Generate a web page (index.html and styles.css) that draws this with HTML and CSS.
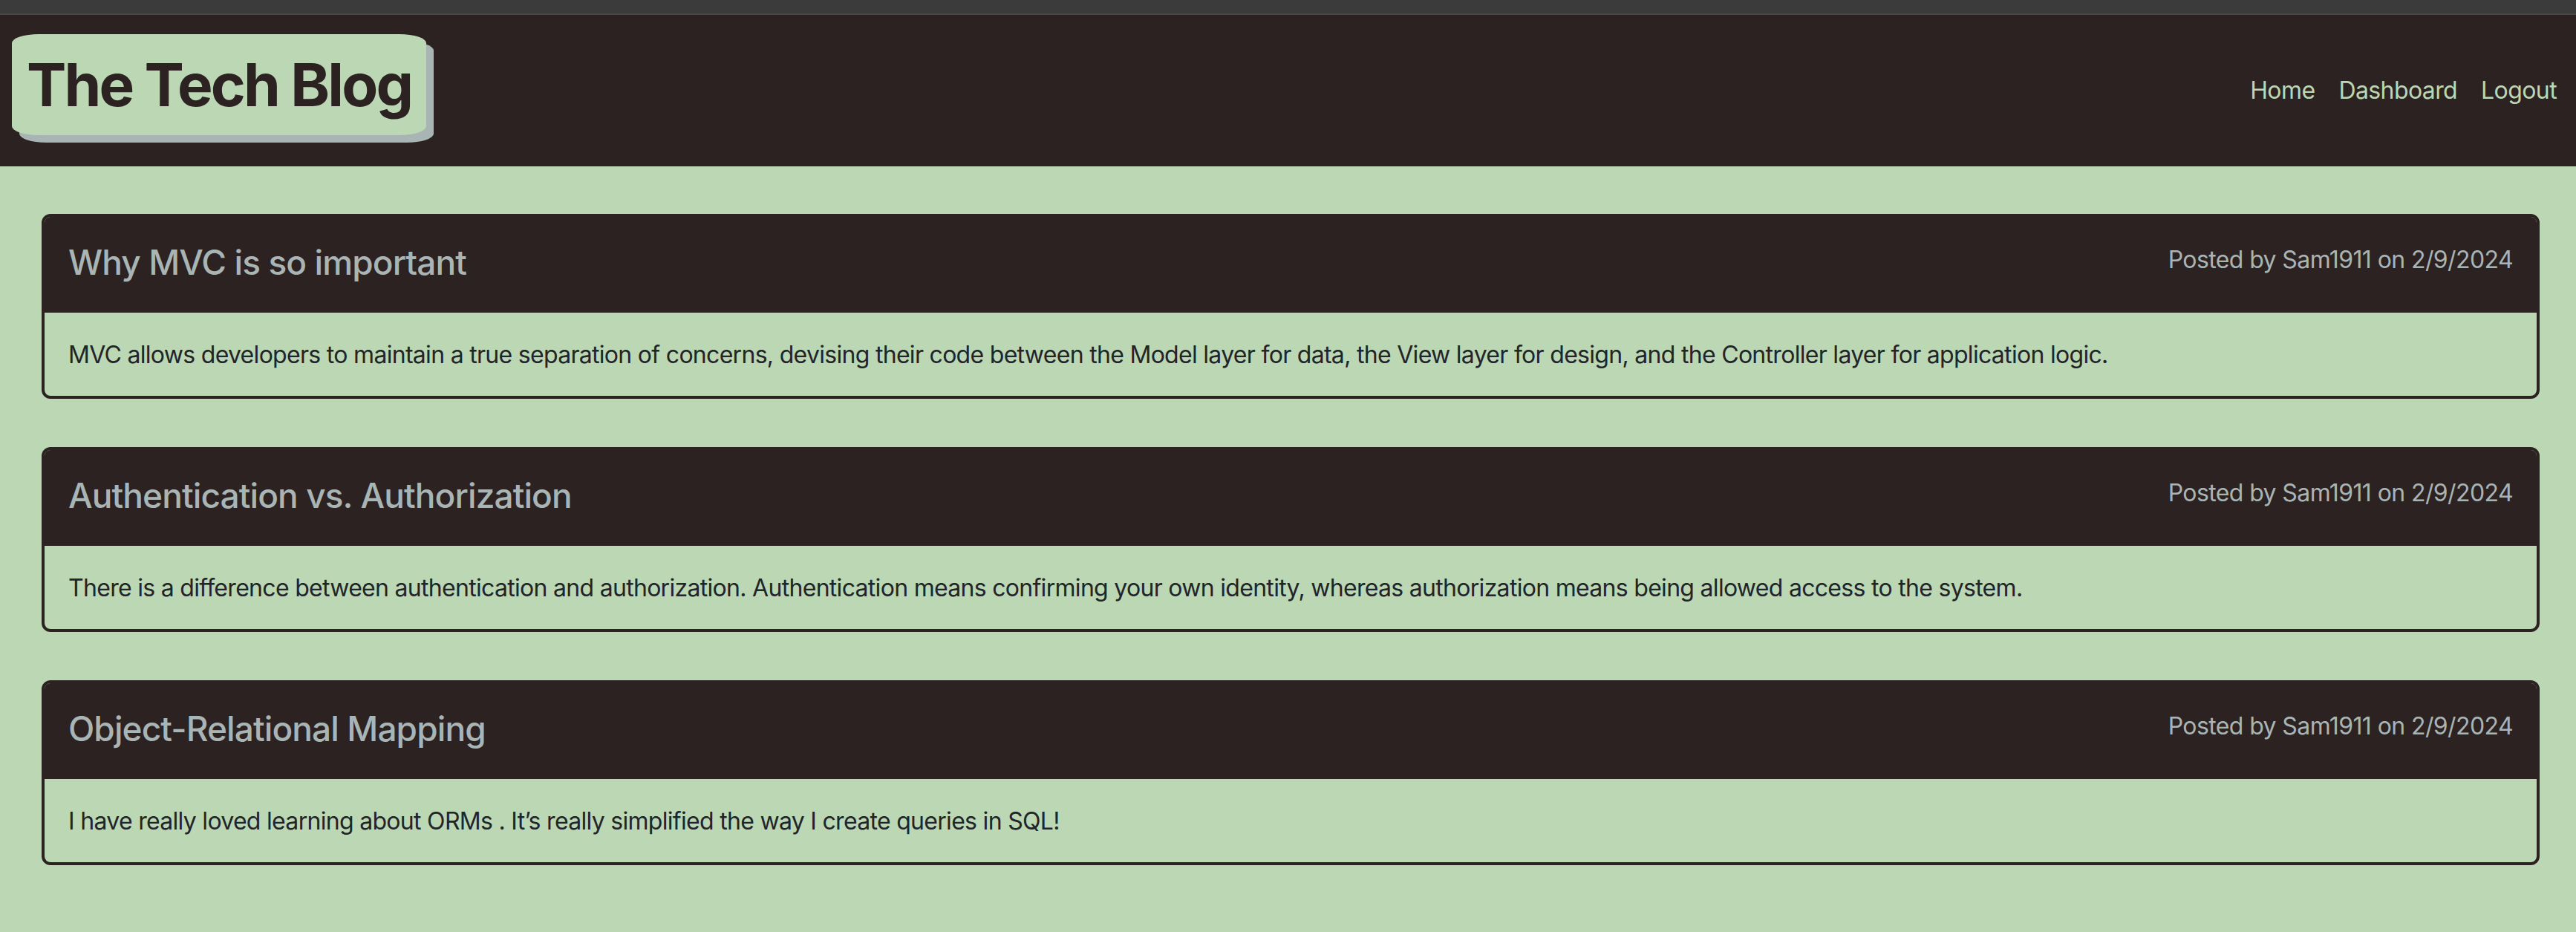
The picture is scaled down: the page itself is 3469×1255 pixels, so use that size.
FILE: index.html
```html
<!DOCTYPE html>
<html lang="en">
<head>
<meta charset="utf-8">
<title>The Tech Blog</title>
<link rel="stylesheet" href="styles.css">
</head>
<body>
<div class="chrome-bar"></div>
<header class="site-header">
  <h1 class="logo">The Tech Blog</h1>
  <nav class="nav">
    <a class="nav-link" href="#">Home</a>
    <a class="nav-link" href="#">Dashboard</a>
    <a class="nav-link" href="#">Logout</a>
  </nav>
</header>
<main class="posts">
  <article class="card">
    <div class="card-header">
      <h2 class="card-title">Why MVC is so important</h2>
      <p class="card-meta">Posted by Sam1911 on 2/9/2024</p>
    </div>
    <div class="card-body">
      <p>MVC allows developers to maintain a true separation of concerns, devising their code between the Model layer for data, the View layer for design, and the Controller layer for application logic.</p>
    </div>
  </article>
  <article class="card">
    <div class="card-header">
      <h2 class="card-title">Authentication vs. Authorization</h2>
      <p class="card-meta">Posted by Sam1911 on 2/9/2024</p>
    </div>
    <div class="card-body">
      <p>There is a difference between authentication and authorization. Authentication means confirming your own identity, whereas authorization means being allowed access to the system.</p>
    </div>
  </article>
  <article class="card">
    <div class="card-header">
      <h2 class="card-title">Object-Relational Mapping</h2>
      <p class="card-meta">Posted by Sam1911 on 2/9/2024</p>
    </div>
    <div class="card-body">
      <p>I have really loved learning about ORMs . It’s really simplified the way I create queries in SQL!</p>
    </div>
  </article>
</main>
</body>
</html>
```

FILE: styles.css
```css
* { box-sizing: border-box; }

html, body {
  margin: 0;
  padding: 0;
}

body {
  background: #bbd7b4;
  font-family: Inter, "Noto Sans", "Liberation Sans", sans-serif;
  color: #212529;
  min-height: 1255px;
}

.chrome-bar {
  height: 20px;
  background: #3b3b3b;
  border-bottom: 2px solid #474747;
}

.site-header {
  height: 204px;
  background: #2b2221;
  display: flex;
  align-items: center;
  justify-content: space-between;
  padding: 0 10px 0 16px;
}

.logo {
  margin: 0 0 16px 0;
  height: 136px;
  padding: 20px 20px 20px 20px;
  background: #bbd7b4;
  color: #2b2221;
  font-size: 80px;
  line-height: 96px;
  font-weight: 700;
  letter-spacing: -2.8px;
  border-radius: 36px / 12px;
  box-shadow: 10px 10px 0 #a9b4b5;
}

.nav {
  display: flex;
}

.nav-link {
  color: #bbd7b4;
  text-decoration: none;
  font-size: 32px;
  line-height: 48px;
  letter-spacing: -0.6px;
  padding: 0 16px;
}

.posts {
  padding: 64px 49px 0 56px;
  display: flex;
  flex-direction: column;
  gap: 65px;
}

.card {
  border: 4px solid #2b2221;
  border-radius: 12px;
  overflow: hidden;
  background: #bbd7b4;
}

.card-header {
  background: #2b2221;
  display: flex;
  justify-content: space-between;
  align-items: flex-start;
  padding: 34px 32px 40px 32px;
}

.card-title {
  margin: 0;
  color: #a9b4b5;
  font-size: 46px;
  line-height: 55px;
  font-weight: 500;
  letter-spacing: -0.9px;
}

.card-meta {
  margin: 0;
  color: #a9b4b5;
  font-size: 32px;
  line-height: 48px;
  letter-spacing: -0.6px;
}

.card-body {
  padding: 33px 32px 31px 32px;
}

.card-body p {
  margin: 0;
  font-size: 32px;
  line-height: 48px;
  letter-spacing: -0.7px;
}
```
